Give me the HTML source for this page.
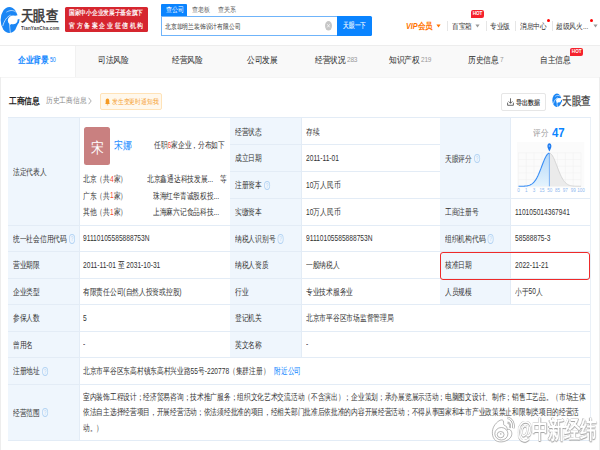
<!DOCTYPE html>
<html><head><meta charset="utf-8">
<style>
*{margin:0;padding:0;box-sizing:border-box}
html,body{width:600px;height:450px;overflow:hidden;background:#fff}
body{position:relative;font-family:"Liberation Sans",sans-serif;color:#333;line-height:1}
.a{position:absolute;white-space:nowrap}
.a{-webkit-text-stroke:0px currentColor}
.q{display:inline-block;width:8.9px;height:9.2px;border:0.8px solid #b3d3f3;border-radius:50%;color:#b3d3f3;font-size:6.3px;line-height:7.8px;text-align:center;vertical-align:middle;margin-left:2.6px;position:relative;top:-0.5px}
</style></head><body>
<svg class="a" style="left:0px;top:6px" width="20" height="28" viewBox="0 0 321 450">
  <ellipse cx="150" cy="225" rx="140" ry="208" fill="#1a86f5"/>
  <ellipse cx="212" cy="232" rx="86" ry="80" fill="#fff"/>
  <path d="M245 158 L330 140 L330 212 L275 212Z" fill="#fff"/>
  <path d="M300 212 C298 290 245 322 176 304" fill="none" stroke="#1a86f5" stroke-width="30"/>
  <g fill="none" stroke="#fff" stroke-linecap="round">
   <path d="M45 318 C70 232 110 172 165 150" stroke-width="11"/>
   <path d="M108 96 C150 70 205 60 248 92" stroke-width="10"/>
   <path d="M152 290 C156 335 160 380 166 430" stroke-width="10"/>
  </g>
  <path d="M150 0 H330 V10 H150Z" fill="none"/>
</svg>
<div class="a" style="left:21px;top:5.60px;line-height:20px;font-size:15.2px;color:#3a3a3a;transform:scaleX(0.84);transform-origin:0 50%;letter-spacing:-0.3px;-webkit-text-stroke:0.55px #3a3a3a">天眼查</div>
<div class="a" style="left:21.3px;top:18.20px;line-height:20px;font-size:5.8px;color:#444;transform:scaleX(0.78);transform-origin:0 50%;letter-spacing:0.2px;font-weight:bold">TianYanCha.com</div>
<div class="a" style="left:65.3px;top:7.2px;width:82.70px;height:25.30px;background:#d6262f;border-radius:1.5px"></div>
<div class="a" style="left:69.2px;top:3.40px;line-height:20px;font-size:6.8px;color:#fff;transform:scaleX(0.815);transform-origin:0 50%;-webkit-text-stroke:0.2px #fff">国家中小企业发展子基金旗下</div>
<div class="a" style="left:69.2px;top:15.80px;line-height:20px;font-size:6.8px;color:#fff;transform:scaleX(0.84);transform-origin:0 50%;letter-spacing:2.05px;-webkit-text-stroke:0.2px #fff">官方备案企业征信机构</div>
<div class="a" style="left:161.3px;top:4.2px;width:25.90px;height:11.70px;background:#0a84ff;border-radius:1px 1px 0 0"></div>
<div class="a" style="left:165.5px;top:0.20px;line-height:20px;font-size:7px;color:#fff;transform:scaleX(0.86);transform-origin:0 50%;">查公司</div>
<div class="a" style="left:191.7px;top:0.20px;line-height:20px;font-size:7px;color:#666;transform:scaleX(0.86);transform-origin:0 50%;-webkit-text-stroke:0">查老板</div>
<div class="a" style="left:218px;top:0.20px;line-height:20px;font-size:7px;color:#666;transform:scaleX(0.86);transform-origin:0 50%;-webkit-text-stroke:0">查关系</div>
<div class="a" style="left:161.3px;top:15.8px;width:176.70px;height:20.00px;border:1px solid #6fb4fa;border-right:none;background:#fff"></div>
<div class="a" style="left:165.2px;top:16.70px;line-height:20px;font-size:6.9px;color:#444;transform:scaleX(0.83);transform-origin:0 50%;-webkit-text-stroke:0.05px #444">北京菲明兰装饰设计有限公司</div>
<svg class="a" style="left:325px;top:21.2px" width="7" height="9.6" viewBox="0 0 7 9.6"><ellipse cx="3.5" cy="4.8" rx="3.5" ry="4.8" fill="#c6c6c6"/><path d="M2.2 3.2 L4.8 6.4 M4.8 3.2 L2.2 6.4" stroke="#fff" stroke-width="0.7"/></svg>
<div class="a" style="left:337.2px;top:15.8px;width:34.80px;height:20.00px;background:#0a84ff;border-radius:0 1.5px 1.5px 0"></div>
<div class="a" style="left:343.2px;top:16.20px;line-height:20px;font-size:8.2px;color:#fff;transform:scaleX(0.72);transform-origin:0 50%;-webkit-text-stroke:0.1px #fff">天眼一下</div>
<div class="a" style="left:406.3px;top:15.80px;line-height:20px;font-size:8.6px;color:#ff7300;transform:scaleX(0.84);transform-origin:0 50%;font-weight:bold"><i style="font-style:italic">VIP</i>会员</div>
<svg class="a" style="left:436.3px;top:23.8px" width="5" height="4" viewBox="0 0 5 4"><path d="M0.4 0.6 H4.6 L2.5 3.4Z" fill="#ff7300"/></svg>
<div class="a" style="left:446.7px;top:20.8px;width:0.70px;height:10.00px;background:#e6e6e6"></div>
<div class="a" style="left:485.8px;top:20.8px;width:0.70px;height:10.00px;background:#e6e6e6"></div>
<div class="a" style="left:514.7px;top:20.8px;width:0.70px;height:10.00px;background:#e6e6e6"></div>
<div class="a" style="left:551.7px;top:20.8px;width:0.70px;height:10.00px;background:#e6e6e6"></div>
<div class="a" style="left:451.7px;top:16.50px;line-height:20px;font-size:7.6px;color:#333;transform:scaleX(0.84);transform-origin:0 50%;">百宝箱</div>
<svg class="a" style="left:474.8px;top:24.3px" width="5" height="4" viewBox="0 0 5 4"><path d="M0.4 0.6 H4.6 L2.5 3.4Z" fill="#999"/></svg>
<div class="a" style="left:471.3px;top:10px;width:12.50px;height:8.30px;background:#f5222d;border-radius:2px 2px 2px 0"></div>
<div class="a" style="left:471.3px;top:10px;width:12.5px;line-height:8.3px;font-size:4.6px;color:#fff;text-align:center;font-weight:bold">HOT</div>
<div class="a" style="left:490px;top:16.50px;line-height:20px;font-size:7.6px;color:#333;transform:scaleX(0.84);transform-origin:0 50%;">专业版</div>
<div class="a" style="left:519.7px;top:16.50px;line-height:20px;font-size:7.6px;color:#333;transform:scaleX(0.84);transform-origin:0 50%;">消息中心</div>
<div class="a" style="left:546.6px;top:18.8px;width:3.00px;height:3.00px;background:#f00;border-radius:50%"></div>
<div class="a" style="left:555.8px;top:16.50px;line-height:20px;font-size:7.6px;color:#333;transform:scaleX(0.84);transform-origin:0 50%;">超级风火...</div>
<div class="a" style="left:589.8px;top:18.5px;width:3.00px;height:3.00px;background:#f00;border-radius:50%"></div>
<svg class="a" style="left:593px;top:24.3px" width="5" height="4" viewBox="0 0 5 4"><path d="M0.4 0.6 H4.6 L2.5 3.4Z" fill="#999"/></svg>
<div class="a" style="left:0px;top:44.8px;width:600.00px;height:32.50px;background:#f9f9f9"></div>
<div class="a" style="left:0px;top:44.8px;width:75.00px;height:32.50px;background:#fff"></div>
<div class="a" style="left:0px;top:44.6px;width:600.00px;height:1.30px;background:#ededed"></div>
<div class="a" style="left:75px;top:45.5px;width:0.90px;height:31.80px;background:#f1f1f1"></div>
<div class="a" style="left:0px;top:77.2px;width:600.00px;height:1.00px;background:#f5f5f5"></div>
<div class="a" style="left:17.5px;top:50.30px;line-height:20px;font-size:9px;color:#0a84ff;transform:scaleX(0.855);transform-origin:0 50%;font-weight:bold;-webkit-text-stroke:0">企业背景<span style="font-size:6.4px;color:#0a84ff;font-weight:normal;position:relative;top:-1.8px;margin-left:1.5px;letter-spacing:-0.3px;-webkit-text-stroke:0">50</span></div>
<div class="a" style="left:97.5px;top:50.30px;line-height:20px;font-size:9px;color:#333;transform:scaleX(0.855);transform-origin:0 50%;-webkit-text-stroke:0.05px #333">司法风险</div>
<div class="a" style="left:171.7px;top:50.30px;line-height:20px;font-size:9px;color:#333;transform:scaleX(0.855);transform-origin:0 50%;-webkit-text-stroke:0.05px #333">经营风险</div>
<div class="a" style="left:246.7px;top:50.30px;line-height:20px;font-size:9px;color:#333;transform:scaleX(0.855);transform-origin:0 50%;-webkit-text-stroke:0.05px #333">公司发展</div>
<div class="a" style="left:315px;top:50.30px;line-height:20px;font-size:9px;color:#333;transform:scaleX(0.855);transform-origin:0 50%;-webkit-text-stroke:0.05px #333">经营状况<span style="font-size:7.6px;color:#999;font-weight:normal;position:relative;top:-0.9px;margin-left:1.5px;letter-spacing:-0.3px;-webkit-text-stroke:0">283</span></div>
<div class="a" style="left:389px;top:50.30px;line-height:20px;font-size:9px;color:#333;transform:scaleX(0.855);transform-origin:0 50%;-webkit-text-stroke:0.05px #333">知识产权<span style="font-size:7.6px;color:#999;font-weight:normal;position:relative;top:-0.9px;margin-left:1.5px;letter-spacing:-0.3px;-webkit-text-stroke:0">219</span></div>
<div class="a" style="left:467.5px;top:50.30px;line-height:20px;font-size:9px;color:#333;transform:scaleX(0.855);transform-origin:0 50%;-webkit-text-stroke:0.05px #333">历史信息<span style="font-size:7.6px;color:#999;font-weight:normal;position:relative;top:-0.9px;margin-left:1.5px;letter-spacing:-0.3px;-webkit-text-stroke:0">7</span></div>
<div class="a" style="left:539.9px;top:50.30px;line-height:20px;font-size:9px;color:#333;transform:scaleX(0.855);transform-origin:0 50%;-webkit-text-stroke:0.05px #333">自主信息</div>
<div class="a" style="left:570.3px;top:48.2px;width:12.80px;height:8.10px;background:#f5222d;border-radius:2px 2px 2px 0"></div>
<div class="a" style="left:570.3px;top:48.2px;width:12.8px;line-height:8.1px;font-size:4.6px;color:#fff;text-align:center;font-weight:bold">HOT</div>
<div class="a" style="left:0px;top:77.3px;width:0.80px;height:372.70px;background:#ededed"></div>
<div class="a" style="left:599px;top:77.3px;width:1.00px;height:372.70px;background:#ededed"></div>
<div class="a" style="left:8.7px;top:90.70px;line-height:20px;font-size:9px;color:#222;transform:scaleX(0.86);transform-origin:0 50%;font-weight:bold;-webkit-text-stroke:0">工商信息</div>
<div class="a" style="left:46px;top:91.40px;line-height:20px;font-size:8px;color:#888;transform:scaleX(0.84);transform-origin:0 50%;">历史工商信息</div>
<svg class="a" style="left:87.8px;top:96.9px" width="4" height="8" viewBox="0 0 4 8"><path d="M0.6 0.8 L3.2 4 L0.6 7.2" stroke="#999" stroke-width="0.8" fill="none"/></svg>
<div class="a" style="left:100.2px;top:92.8px;width:62.20px;height:16.90px;background:#fff8ec;border:0.8px solid #ffe3b8;border-radius:2px"></div>
<svg class="a" style="left:104.6px;top:97.6px" width="5" height="8" viewBox="0 0 5 8"><path d="M2.5 0.6 C1.2 0.6 0.7 1.8 0.7 3 V5 L0.2 6 H4.8 L4.3 5 V3 C4.3 1.8 3.8 0.6 2.5 0.6Z M1.8 6.5 H3.2 V7.3 H1.8Z" fill="#f59a23"/></svg>
<div class="a" style="left:112.2px;top:91.80px;line-height:20px;font-size:7px;color:#f5a031;transform:scaleX(0.83);transform-origin:0 50%;">发生变更时通知我</div>
<div class="a" style="left:501.4px;top:93.4px;width:44.20px;height:18.00px;background:#fff;border:0.8px solid #e6e6e6;border-radius:2px"></div>
<svg class="a" style="left:506.5px;top:98.3px" width="7" height="8" viewBox="0 0 7 8"><path d="M3.5 0.3 V5.2 M1.6 3.4 L3.5 5.3 L5.4 3.4 M0.6 4.6 V7.3 H6.4 V4.6" stroke="#444" stroke-width="0.8" fill="none"/></svg>
<div class="a" style="left:515.6px;top:92.60px;line-height:20px;font-size:7px;color:#222;transform:scaleX(0.86);transform-origin:0 50%;-webkit-text-stroke:0.15px #222">导出数据</div>
<svg class="a" style="left:551.5px;top:92.8px" width="10.5" height="14.6" viewBox="0 0 321 450">
  <ellipse cx="150" cy="225" rx="140" ry="208" fill="#1a86f5"/>
  <ellipse cx="212" cy="232" rx="86" ry="80" fill="#fff"/>
  <path d="M245 158 L330 140 L330 212 L275 212Z" fill="#fff"/>
  <path d="M300 212 C298 290 245 322 176 304" fill="none" stroke="#1a86f5" stroke-width="34"/>
  <g fill="none" stroke="#fff" stroke-linecap="round">
   <path d="M45 318 C70 232 110 172 165 150" stroke-width="20"/>
   <path d="M108 96 C150 70 205 60 248 92" stroke-width="18"/>
   <path d="M152 290 C156 335 160 380 166 430" stroke-width="18"/>
  </g>
  <path d="M150 0 H330 V10 H150Z" fill="none"/>
</svg>
<div class="a" style="left:562.3px;top:91.40px;line-height:20px;font-size:12px;color:#3a3a3a;transform:scaleX(0.8);transform-origin:0 50%;-webkit-text-stroke:0.2px #3a3a3a">天眼查</div>
<div class="a" style="left:8.2px;top:117.9px;width:71.10px;height:107.50px;background:#eff6fd"></div>
<div class="a" style="left:13.0px;top:161.95px;line-height:20px;font-size:9px;color:#333;transform:scaleX(0.747);transform-origin:0 50%;">法定代表人</div>
<div class="a" style="left:79.3px;top:117.9px;width:150.60px;height:107.50px;background:#fff"></div>
<div class="a" style="left:229.9px;top:117.9px;width:71.50px;height:26.70px;background:#eff6fd"></div>
<div class="a" style="left:234.70000000000002px;top:121.55px;line-height:20px;font-size:9px;color:#333;transform:scaleX(0.747);transform-origin:0 50%;">经营状态</div>
<div class="a" style="left:301.4px;top:117.9px;width:138.60px;height:26.70px;background:#fff"></div>
<div class="a" style="left:305.9px;top:121.55px;line-height:20px;font-size:9px;color:#333;transform:scaleX(0.747);transform-origin:0 50%;">存续</div>
<div class="a" style="left:229.9px;top:144.6px;width:71.50px;height:27.00px;background:#eff6fd"></div>
<div class="a" style="left:234.70000000000002px;top:148.40px;line-height:20px;font-size:9px;color:#333;transform:scaleX(0.747);transform-origin:0 50%;">成立日期</div>
<div class="a" style="left:301.4px;top:144.6px;width:138.60px;height:27.00px;background:#fff"></div>
<div class="a" style="left:305.9px;top:148.40px;line-height:20px;font-size:9px;color:#333;transform:scaleX(0.747);transform-origin:0 50%;"><span style="display:inline-block;font-size:9.2px;transform:scaleX(0.9665);transform-origin:0 50%;margin-right:-1.53px;-webkit-text-stroke:0;position:relative;top:-0.4px">2011-11-01</span></div>
<div class="a" style="left:229.9px;top:171.6px;width:71.50px;height:26.90px;background:#eff6fd"></div>
<div class="a" style="left:234.70000000000002px;top:175.35px;line-height:20px;font-size:9px;color:#333;transform:scaleX(0.747);transform-origin:0 50%;">注册资本<span class="q">?</span></div>
<div class="a" style="left:301.4px;top:171.6px;width:138.60px;height:26.90px;background:#fff"></div>
<div class="a" style="left:305.9px;top:175.35px;line-height:20px;font-size:9px;color:#333;transform:scaleX(0.747);transform-origin:0 50%;"><span style="display:inline-block;font-size:9.2px;transform:scaleX(0.9665);transform-origin:0 50%;margin-right:-0.34px;-webkit-text-stroke:0;position:relative;top:-0.4px">10</span>万人民币</div>
<div class="a" style="left:229.9px;top:198.5px;width:71.50px;height:26.90px;background:#eff6fd"></div>
<div class="a" style="left:234.70000000000002px;top:202.25px;line-height:20px;font-size:9px;color:#333;transform:scaleX(0.747);transform-origin:0 50%;">实缴资本</div>
<div class="a" style="left:301.4px;top:198.5px;width:138.60px;height:26.90px;background:#fff"></div>
<div class="a" style="left:305.9px;top:202.25px;line-height:20px;font-size:9px;color:#333;transform:scaleX(0.747);transform-origin:0 50%;"><span style="display:inline-block;font-size:9.2px;transform:scaleX(0.9665);transform-origin:0 50%;margin-right:-0.34px;-webkit-text-stroke:0;position:relative;top:-0.4px">10</span>万人民币</div>
<div class="a" style="left:440px;top:117.9px;width:70.40px;height:80.60px;background:#eff6fd"></div>
<div class="a" style="left:444.8px;top:148.50px;line-height:20px;font-size:9px;color:#333;transform:scaleX(0.747);transform-origin:0 50%;">天眼评分<span class="q">?</span></div>
<div class="a" style="left:510.4px;top:117.9px;width:80.30px;height:80.60px;background:#fff"></div>
<div class="a" style="left:440px;top:198.5px;width:70.40px;height:26.90px;background:#eff6fd"></div>
<div class="a" style="left:444.8px;top:202.25px;line-height:20px;font-size:9px;color:#333;transform:scaleX(0.747);transform-origin:0 50%;">工商注册号</div>
<div class="a" style="left:510.4px;top:198.5px;width:80.30px;height:26.90px;background:#fff"></div>
<div class="a" style="left:514.9px;top:202.25px;line-height:20px;font-size:9px;color:#333;transform:scaleX(0.747);transform-origin:0 50%;"><span style="display:inline-block;font-size:9.2px;transform:scaleX(0.9665);transform-origin:0 50%;margin-right:-2.55px;-webkit-text-stroke:0;position:relative;top:-0.4px">110105014367941</span></div>
<div class="a" style="left:8.2px;top:225.4px;width:71.10px;height:26.30px;background:#eff6fd"></div>
<div class="a" style="left:13.0px;top:228.85px;line-height:20px;font-size:9px;color:#333;transform:scaleX(0.747);transform-origin:0 50%;">统一社会信用代码<span class="q">?</span></div>
<div class="a" style="left:79.3px;top:225.4px;width:150.60px;height:26.30px;background:#fff"></div>
<div class="a" style="left:83.1px;top:228.85px;line-height:20px;font-size:9px;color:#333;transform:scaleX(0.747);transform-origin:0 50%;"><span style="display:inline-block;font-size:9.2px;transform:scaleX(0.9665);transform-origin:0 50%;margin-right:-3.09px;-webkit-text-stroke:0;position:relative;top:-0.4px">91110105585888753N</span></div>
<div class="a" style="left:229.9px;top:225.4px;width:71.50px;height:26.30px;background:#eff6fd"></div>
<div class="a" style="left:234.70000000000002px;top:228.85px;line-height:20px;font-size:9px;color:#333;transform:scaleX(0.747);transform-origin:0 50%;">纳税人识别号<span class="q">?</span></div>
<div class="a" style="left:301.4px;top:225.4px;width:138.60px;height:26.30px;background:#fff"></div>
<div class="a" style="left:305.9px;top:228.85px;line-height:20px;font-size:9px;color:#333;transform:scaleX(0.747);transform-origin:0 50%;"><span style="display:inline-block;font-size:9.2px;transform:scaleX(0.9665);transform-origin:0 50%;margin-right:-3.09px;-webkit-text-stroke:0;position:relative;top:-0.4px">91110105585888753N</span></div>
<div class="a" style="left:440px;top:225.4px;width:70.40px;height:26.30px;background:#eff6fd"></div>
<div class="a" style="left:444.8px;top:228.85px;line-height:20px;font-size:9px;color:#333;transform:scaleX(0.747);transform-origin:0 50%;">组织机构代码<span class="q">?</span></div>
<div class="a" style="left:510.4px;top:225.4px;width:80.30px;height:26.30px;background:#fff"></div>
<div class="a" style="left:514.9px;top:228.85px;line-height:20px;font-size:9px;color:#333;transform:scaleX(0.747);transform-origin:0 50%;"><span style="display:inline-block;font-size:9.2px;transform:scaleX(0.9665);transform-origin:0 50%;margin-right:-1.64px;-webkit-text-stroke:0;position:relative;top:-0.4px">58588875-3</span></div>
<div class="a" style="left:8.2px;top:251.7px;width:71.10px;height:26.50px;background:#eff6fd"></div>
<div class="a" style="left:13.0px;top:255.25px;line-height:20px;font-size:9px;color:#333;transform:scaleX(0.747);transform-origin:0 50%;">营业期限</div>
<div class="a" style="left:79.3px;top:251.7px;width:150.60px;height:26.50px;background:#fff"></div>
<div class="a" style="left:83.1px;top:255.25px;line-height:20px;font-size:9px;color:#333;transform:scaleX(0.747);transform-origin:0 50%;"><span style="display:inline-block;font-size:9.2px;transform:scaleX(0.9665);transform-origin:0 50%;margin-right:-1.53px;-webkit-text-stroke:0;position:relative;top:-0.4px">2011-11-01</span> 至 <span style="display:inline-block;font-size:9.2px;transform:scaleX(0.9665);transform-origin:0 50%;margin-right:-1.57px;-webkit-text-stroke:0;position:relative;top:-0.4px">2031-10-31</span></div>
<div class="a" style="left:229.9px;top:251.7px;width:71.50px;height:26.50px;background:#eff6fd"></div>
<div class="a" style="left:234.70000000000002px;top:255.25px;line-height:20px;font-size:9px;color:#333;transform:scaleX(0.747);transform-origin:0 50%;">纳税人资质</div>
<div class="a" style="left:301.4px;top:251.7px;width:138.60px;height:26.50px;background:#fff"></div>
<div class="a" style="left:305.9px;top:255.25px;line-height:20px;font-size:9px;color:#333;transform:scaleX(0.747);transform-origin:0 50%;">一般纳税人</div>
<div class="a" style="left:440px;top:251.7px;width:70.40px;height:26.50px;background:#eff6fd"></div>
<div class="a" style="left:444.8px;top:255.25px;line-height:20px;font-size:9px;color:#333;transform:scaleX(0.747);transform-origin:0 50%;">核准日期</div>
<div class="a" style="left:510.4px;top:251.7px;width:80.30px;height:26.50px;background:#fff"></div>
<div class="a" style="left:514.9px;top:255.25px;line-height:20px;font-size:9px;color:#333;transform:scaleX(0.747);transform-origin:0 50%;"><span style="display:inline-block;font-size:9.2px;transform:scaleX(0.9665);transform-origin:0 50%;margin-right:-1.55px;-webkit-text-stroke:0;position:relative;top:-0.4px">2022-11-21</span></div>
<div class="a" style="left:8.2px;top:278.2px;width:71.10px;height:26.30px;background:#eff6fd"></div>
<div class="a" style="left:13.0px;top:281.65px;line-height:20px;font-size:9px;color:#333;transform:scaleX(0.747);transform-origin:0 50%;">企业类型</div>
<div class="a" style="left:79.3px;top:278.2px;width:150.60px;height:26.30px;background:#fff"></div>
<div class="a" style="left:83.1px;top:281.65px;line-height:20px;font-size:9px;color:#333;transform:scaleX(0.747);transform-origin:0 50%;">有限责任公司(自然人投资或控股)</div>
<div class="a" style="left:229.9px;top:278.2px;width:71.50px;height:26.30px;background:#eff6fd"></div>
<div class="a" style="left:234.70000000000002px;top:281.65px;line-height:20px;font-size:9px;color:#333;transform:scaleX(0.747);transform-origin:0 50%;">行业</div>
<div class="a" style="left:301.4px;top:278.2px;width:138.60px;height:26.30px;background:#fff"></div>
<div class="a" style="left:305.9px;top:281.65px;line-height:20px;font-size:9px;color:#333;transform:scaleX(0.747);transform-origin:0 50%;">专业技术服务业</div>
<div class="a" style="left:440px;top:278.2px;width:70.40px;height:26.30px;background:#eff6fd"></div>
<div class="a" style="left:444.8px;top:281.65px;line-height:20px;font-size:9px;color:#333;transform:scaleX(0.747);transform-origin:0 50%;">人员规模</div>
<div class="a" style="left:510.4px;top:278.2px;width:80.30px;height:26.30px;background:#fff"></div>
<div class="a" style="left:514.9px;top:281.65px;line-height:20px;font-size:9px;color:#333;transform:scaleX(0.747);transform-origin:0 50%;">小于<span style="display:inline-block;font-size:9.2px;transform:scaleX(0.9665);transform-origin:0 50%;margin-right:-0.34px;-webkit-text-stroke:0;position:relative;top:-0.4px">50</span>人</div>
<div class="a" style="left:8.2px;top:304.5px;width:71.10px;height:26.50px;background:#eff6fd"></div>
<div class="a" style="left:13.0px;top:308.05px;line-height:20px;font-size:9px;color:#333;transform:scaleX(0.747);transform-origin:0 50%;">参保人数</div>
<div class="a" style="left:79.3px;top:304.5px;width:150.60px;height:26.50px;background:#fff"></div>
<div class="a" style="left:83.1px;top:308.05px;line-height:20px;font-size:9px;color:#333;transform:scaleX(0.747);transform-origin:0 50%;"><span style="display:inline-block;font-size:9.2px;transform:scaleX(0.9665);transform-origin:0 50%;margin-right:-0.17px;-webkit-text-stroke:0;position:relative;top:-0.4px">5</span></div>
<div class="a" style="left:229.9px;top:304.5px;width:71.50px;height:26.50px;background:#eff6fd"></div>
<div class="a" style="left:234.70000000000002px;top:308.05px;line-height:20px;font-size:9px;color:#333;transform:scaleX(0.747);transform-origin:0 50%;">登记机关</div>
<div class="a" style="left:301.4px;top:304.5px;width:289.30px;height:26.50px;background:#fff"></div>
<div class="a" style="left:305.9px;top:308.05px;line-height:20px;font-size:9px;color:#333;transform:scaleX(0.747);transform-origin:0 50%;">北京市平谷区市场监督管理局</div>
<div class="a" style="left:8.2px;top:331px;width:71.10px;height:26.40px;background:#eff6fd"></div>
<div class="a" style="left:13.0px;top:334.50px;line-height:20px;font-size:9px;color:#333;transform:scaleX(0.747);transform-origin:0 50%;">曾用名</div>
<div class="a" style="left:79.3px;top:331px;width:150.60px;height:26.40px;background:#fff"></div>
<div class="a" style="left:83.1px;top:334.50px;line-height:20px;font-size:9px;color:#333;transform:scaleX(0.747);transform-origin:0 50%;"><span style="display:inline-block;font-size:9.2px;transform:scaleX(0.9665);transform-origin:0 50%;margin-right:-0.10px;-webkit-text-stroke:0;position:relative;top:-0.4px">-</span></div>
<div class="a" style="left:229.9px;top:331px;width:71.50px;height:26.40px;background:#eff6fd"></div>
<div class="a" style="left:234.70000000000002px;top:334.50px;line-height:20px;font-size:9px;color:#333;transform:scaleX(0.747);transform-origin:0 50%;">英文名称</div>
<div class="a" style="left:301.4px;top:331px;width:289.30px;height:26.40px;background:#fff"></div>
<div class="a" style="left:305.9px;top:334.50px;line-height:20px;font-size:9px;color:#333;transform:scaleX(0.747);transform-origin:0 50%;"><span style="display:inline-block;font-size:9.2px;transform:scaleX(0.9665);transform-origin:0 50%;margin-right:-0.10px;-webkit-text-stroke:0;position:relative;top:-0.4px">-</span></div>
<div class="a" style="left:8.2px;top:357.4px;width:71.10px;height:26.80px;background:#eff6fd"></div>
<div class="a" style="left:13.0px;top:361.10px;line-height:20px;font-size:9px;color:#333;transform:scaleX(0.747);transform-origin:0 50%;">注册地址<span class="q">?</span></div>
<div class="a" style="left:79.3px;top:357.4px;width:511.40px;height:26.80px;background:#fff"></div>
<div class="a" style="left:83.1px;top:361.10px;line-height:20px;font-size:9px;color:#333;transform:scaleX(0.747);transform-origin:0 50%;">北京市平谷区东高村镇东高村兴业路<span style="display:inline-block;font-size:9.2px;transform:scaleX(0.9665);transform-origin:0 50%;margin-right:-0.34px;-webkit-text-stroke:0;position:relative;top:-0.4px">55</span>号<span style="display:inline-block;font-size:9.2px;transform:scaleX(0.9665);transform-origin:0 50%;margin-right:-1.13px;-webkit-text-stroke:0;position:relative;top:-0.4px">-220778</span>（集群注册）<span style="color:#0a84ff;margin-left:6.4px">附近公司</span></div>
<div class="a" style="left:8.2px;top:384.2px;width:71.10px;height:56.30px;background:#eff6fd"></div>
<div class="a" style="left:13.0px;top:402.65px;line-height:20px;font-size:9px;color:#333;transform:scaleX(0.747);transform-origin:0 50%;">经营范围<span class="q">?</span></div>
<div class="a" style="left:79.3px;top:384.2px;width:511.40px;height:56.30px;background:#fff"></div>
<div class="a" style="left:83px;top:386.90px;line-height:20px;font-size:9px;color:#333;transform:scaleX(0.745);transform-origin:0 50%;">室内装饰工程设计；经济贸易咨询；技术推广服务；组织文化艺术交流活动（不含演出）；企业策划；承办展览展示活动；电脑图文设计、制作；销售工艺品。（市场主体</div>
<div class="a" style="left:83px;top:402.00px;line-height:20px;font-size:9px;color:#333;transform:scaleX(0.745);transform-origin:0 50%;">依法自主选择经营项目，开展经营活动；依法须经批准的项目，经相关部门批准后依批准的内容开展经营活动；不得从事国家和本市产业政策禁止和限制类项目的经营活</div>
<div class="a" style="left:83px;top:417.60px;line-height:20px;font-size:9px;color:#333;transform:scaleX(0.745);transform-origin:0 50%;">动。）</div>
<div class="a" style="left:8.2px;top:117.4px;width:582.50px;height:1.00px;background:#e3ecf6"></div>
<div class="a" style="left:8.2px;top:440.0px;width:582.50px;height:1.00px;background:#e3ecf6"></div>
<div class="a" style="left:229.9px;top:144.1px;width:210.10px;height:1.00px;background:#e3ecf6"></div>
<div class="a" style="left:229.9px;top:171.1px;width:210.10px;height:1.00px;background:#e3ecf6"></div>
<div class="a" style="left:229.9px;top:198.0px;width:210.10px;height:1.00px;background:#e3ecf6"></div>
<div class="a" style="left:440px;top:198.0px;width:150.70px;height:1.00px;background:#e3ecf6"></div>
<div class="a" style="left:8.2px;top:224.9px;width:582.50px;height:1.00px;background:#e3ecf6"></div>
<div class="a" style="left:8.2px;top:251.2px;width:582.50px;height:1.00px;background:#e3ecf6"></div>
<div class="a" style="left:8.2px;top:277.7px;width:582.50px;height:1.00px;background:#e3ecf6"></div>
<div class="a" style="left:8.2px;top:304.0px;width:582.50px;height:1.00px;background:#e3ecf6"></div>
<div class="a" style="left:8.2px;top:330.5px;width:582.50px;height:1.00px;background:#e3ecf6"></div>
<div class="a" style="left:8.2px;top:356.9px;width:582.50px;height:1.00px;background:#e3ecf6"></div>
<div class="a" style="left:8.2px;top:383.7px;width:582.50px;height:1.00px;background:#e3ecf6"></div>
<div class="a" style="left:590.2px;top:117.9px;width:1.00px;height:322.60px;background:#eaf0f7"></div>
<div class="a" style="left:78.8px;top:117.9px;width:1.00px;height:322.60px;background:#e3ecf6"></div>
<div class="a" style="left:300.9px;top:117.9px;width:1.00px;height:239.50px;background:#e3ecf6"></div>
<div class="a" style="left:509.9px;top:117.9px;width:1.00px;height:186.60px;background:#e3ecf6"></div>
<div class="a" style="left:83.6px;top:126.9px;width:26.60px;height:38.10px;background:#c98080;border-radius:2.5px"></div>
<div class="a" style="left:83.6px;top:128.6px;width:26.6px;line-height:37.4px;font-size:15px;color:#fff;text-align:center;transform:scaleX(.86)">宋</div>
<div class="a" style="left:113.7px;top:135.40px;line-height:20px;font-size:11px;color:#1a8cff;transform:scaleX(0.8);transform-origin:0 50%;">宋娜</div>
<div class="a" style="left:154px;top:135.20px;line-height:20px;font-size:9px;color:#333;transform:scaleX(0.747);transform-origin:0 50%;">任职<span style="color:#f5452d"><span style="display:inline-block;font-size:9.2px;transform:scaleX(0.9665);transform-origin:0 50%;margin-right:-0.17px;-webkit-text-stroke:0;position:relative;top:-0.4px">6</span></span>家企业，分布如下</div>
<div class="a" style="left:83px;top:169.00px;line-height:20px;font-size:9px;color:#333;transform:scaleX(0.747);transform-origin:0 50%;">北京（共<span style="color:#f5452d"><span style="display:inline-block;font-size:9.2px;transform:scaleX(0.9665);transform-origin:0 50%;margin-right:-0.17px;-webkit-text-stroke:0;position:relative;top:-0.4px">4</span></span>家）</div>
<div class="a" style="left:83px;top:185.70px;line-height:20px;font-size:9px;color:#333;transform:scaleX(0.747);transform-origin:0 50%;">广东（共<span style="color:#f5452d"><span style="display:inline-block;font-size:9.2px;transform:scaleX(0.9665);transform-origin:0 50%;margin-right:-0.17px;-webkit-text-stroke:0;position:relative;top:-0.4px">1</span></span>家）</div>
<div class="a" style="left:83px;top:202.00px;line-height:20px;font-size:9px;color:#333;transform:scaleX(0.747);transform-origin:0 50%;">其他（共<span style="color:#f5452d"><span style="display:inline-block;font-size:9.2px;transform:scaleX(0.9665);transform-origin:0 50%;margin-right:-0.17px;-webkit-text-stroke:0;position:relative;top:-0.4px">1</span></span>家）</div>
<div class="a" style="left:147px;top:169.00px;line-height:20px;font-size:9px;color:#333;transform:scaleX(0.747);transform-origin:0 50%;">北京鑫通达科技发展...</div>
<div class="a" style="left:219.5px;top:169.00px;line-height:20px;font-size:9px;color:#333;transform:scaleX(0.747);transform-origin:0 50%;">等</div>
<div class="a" style="left:153.3px;top:185.70px;line-height:20px;font-size:9px;color:#333;transform:scaleX(0.747);transform-origin:0 50%;">珠海红华青诚股权投...</div>
<div class="a" style="left:153.3px;top:202.00px;line-height:20px;font-size:9px;color:#333;transform:scaleX(0.747);transform-origin:0 50%;">上海麻六记食品科技...</div>
<div class="a" style="left:533.4px;top:122.80px;line-height:20px;font-size:9px;color:#999;transform:scaleX(0.84);transform-origin:0 50%;">评分</div>
<div class="a" style="left:551.6px;top:122.60px;line-height:20px;font-size:13px;color:#0a84ff;transform:scaleX(0.88);transform-origin:0 50%;font-weight:bold">47</div>
<svg class="a" style="left:0;top:0" width="600" height="450" viewBox="0 0 600 450">
<defs><linearGradient id="bg1" x1="0" y1="0" x2="0" y2="1"><stop offset="0" stop-color="#b4d8f8"/><stop offset="1" stop-color="#e4f3fd"/></linearGradient></defs>
<rect x="517.2" y="141.9" width="67" height="45.7" fill="#fbfbfb"/>
<g stroke="#efefef" stroke-width="0.45"><line x1="518.50" y1="152.8" x2="518.50" y2="186.3"/><line x1="526.31" y1="152.8" x2="526.31" y2="186.3"/><line x1="534.12" y1="152.8" x2="534.12" y2="186.3"/><line x1="541.94" y1="152.8" x2="541.94" y2="186.3"/><line x1="549.75" y1="152.8" x2="549.75" y2="186.3"/><line x1="557.56" y1="152.8" x2="557.56" y2="186.3"/><line x1="565.38" y1="152.8" x2="565.38" y2="186.3"/><line x1="573.19" y1="152.8" x2="573.19" y2="186.3"/><line x1="581.00" y1="152.8" x2="581.00" y2="186.3"/><line x1="518.5" y1="152.80" x2="581" y2="152.80"/><line x1="518.5" y1="159.50" x2="581" y2="159.50"/><line x1="518.5" y1="166.20" x2="581" y2="166.20"/><line x1="518.5" y1="172.90" x2="581" y2="172.90"/><line x1="518.5" y1="179.60" x2="581" y2="179.60"/><line x1="518.5" y1="186.30" x2="581" y2="186.30"/></g>
<polygon points="518.50,186.29 519.27,186.29 520.04,186.28 520.82,186.27 521.59,186.26 522.36,186.24 523.13,186.22 523.91,186.18 524.68,186.13 525.45,186.07 526.23,185.98 527.00,185.87 527.77,185.72 528.54,185.53 529.31,185.29 530.09,184.99 530.86,184.61 531.63,184.15 532.40,183.58 533.18,182.91 533.95,182.11 534.72,181.17 535.50,180.09 536.27,178.86 537.04,177.48 537.81,175.95 538.59,174.27 539.36,172.47 540.13,170.57 540.90,168.58 541.67,166.55 542.45,164.52 543.22,162.52 543.99,160.60 544.76,158.82 545.54,157.21 546.31,155.83 547.08,154.70 547.86,153.88 548.63,153.37 549.40,153.20 549.4,186.3" fill="url(#bg1)"/>
<polygon points="549.4,186.3 549.40,153.20 550.19,153.38 550.98,153.91 551.77,154.77 552.56,155.94 553.35,157.38 554.14,159.05 554.93,160.90 555.72,162.88 556.51,164.93 557.30,167.02 558.09,169.08 558.88,171.10 559.67,173.02 560.46,174.82 561.25,176.48 562.04,178.00 562.83,179.35 563.62,180.55 564.41,181.59 565.20,182.49 565.99,183.24 566.78,183.88 567.57,184.40 568.36,184.83 569.15,185.17 569.94,185.44 570.73,185.66 571.52,185.82 572.31,185.95 573.10,186.04 573.89,186.12 574.68,186.17 575.47,186.21 576.26,186.24 577.05,186.26 577.84,186.27 578.63,186.28 579.42,186.29 580.21,186.29 581.00,186.29" fill="#ebebeb"/>
<polyline points="549.40,153.20 550.19,153.38 550.98,153.91 551.77,154.77 552.56,155.94 553.35,157.38 554.14,159.05 554.93,160.90 555.72,162.88 556.51,164.93 557.30,167.02 558.09,169.08 558.88,171.10 559.67,173.02 560.46,174.82 561.25,176.48 562.04,178.00 562.83,179.35 563.62,180.55 564.41,181.59 565.20,182.49 565.99,183.24 566.78,183.88 567.57,184.40 568.36,184.83 569.15,185.17 569.94,185.44 570.73,185.66 571.52,185.82 572.31,185.95 573.10,186.04 573.89,186.12 574.68,186.17 575.47,186.21 576.26,186.24 577.05,186.26 577.84,186.27 578.63,186.28 579.42,186.29 580.21,186.29 581.00,186.29" fill="none" stroke="#d2d2d2" stroke-width="0.9"/>
<polyline points="518.50,186.29 519.27,186.29 520.04,186.28 520.82,186.27 521.59,186.26 522.36,186.24 523.13,186.22 523.91,186.18 524.68,186.13 525.45,186.07 526.23,185.98 527.00,185.87 527.77,185.72 528.54,185.53 529.31,185.29 530.09,184.99 530.86,184.61 531.63,184.15 532.40,183.58 533.18,182.91 533.95,182.11 534.72,181.17 535.50,180.09 536.27,178.86 537.04,177.48 537.81,175.95 538.59,174.27 539.36,172.47 540.13,170.57 540.90,168.58 541.67,166.55 542.45,164.52 543.22,162.52 543.99,160.60 544.76,158.82 545.54,157.21 546.31,155.83 547.08,154.70 547.86,153.88 548.63,153.37 549.40,153.20" fill="none" stroke="#3a8ef5" stroke-width="1.1"/>
<line x1="549.4" y1="153" x2="549.4" y2="186.3" stroke="#5aa0f5" stroke-width="0.8"/>
<path d="M549.4 151.6 C548.6 149.6 547.4 148 547.4 146 C547.4 144.3 548.3 143.2 549.4 143.2 C550.5 143.2 551.4 144.3 551.4 146 C551.4 148 550.1999999999999 149.6 549.4 151.6Z" fill="#1f7cf0"/>
<ellipse cx="549.4" cy="146" rx="0.8" ry="1.1" fill="#7ab6ff"/>
<g font-family="Liberation Sans" font-size="4.6" fill="#8fb8ee"><text x="518.50" y="192.2" text-anchor="middle">0</text><text x="526.31" y="192.2" text-anchor="middle">1</text><text x="534.12" y="192.2" text-anchor="middle">3</text><text x="541.94" y="192.2" text-anchor="middle">15</text><text x="549.75" y="192.2" text-anchor="middle">50</text><text x="557.56" y="192.2" text-anchor="middle">85</text><text x="565.38" y="192.2" text-anchor="middle">97</text><text x="573.19" y="192.2" text-anchor="middle">99</text><text x="581.00" y="192.2" text-anchor="middle">100</text></g>
</svg>
<div class="a" style="left:439.9px;top:251.9px;width:150.10px;height:27.80px;border:1.3px solid #ee2a2a;border-radius:3px"></div>
<svg class="a" style="left:488px;top:414px" width="32" height="32" viewBox="0 0 450 450">
 <g fill="#fff" stroke="#8d8d8d" stroke-width="9">
  <path d="M215 95 C190 60 120 110 85 170 C50 230 50 330 110 375 C170 410 260 390 310 340 C345 300 340 250 315 225 C300 210 280 215 270 225 C275 190 255 165 230 160 C210 150 225 120 215 95Z"/>
  <ellipse cx="188" cy="278" rx="92" ry="88"/>
  <ellipse cx="178" cy="290" rx="48" ry="44"/>
  <circle cx="180" cy="280" r="9" fill="#8d8d8d" stroke="none"/>
  <path d="M268 55 C330 60 370 120 355 200" fill="none" stroke-width="34" stroke="#999"/>
  <path d="M268 55 C330 60 370 120 355 200" fill="none" stroke-width="16" stroke="#fff"/>
  <path d="M275 120 C305 125 320 160 305 195" fill="none" stroke-width="26" stroke="#999"/>
  <path d="M275 120 C305 125 320 160 305 195" fill="none" stroke-width="10" stroke="#fff"/>
 </g>
</svg>
<div class="a" style="left:517.3px;top:420.20px;line-height:20px;font-size:23.5px;color:#fff;transform:scaleX(0.68);transform-origin:0 50%;font-weight:bold;letter-spacing:-0.5px;-webkit-text-stroke:0;will-change:transform;text-shadow:0.5px 0 0.3px #aaa,-0.5px 0 0.3px #aaa,0 0.5px 0.3px #aaa,0 -0.5px 0.3px #aaa,0.6px 0.8px 1px #ccc">@中新经纬</div>
</body></html>
